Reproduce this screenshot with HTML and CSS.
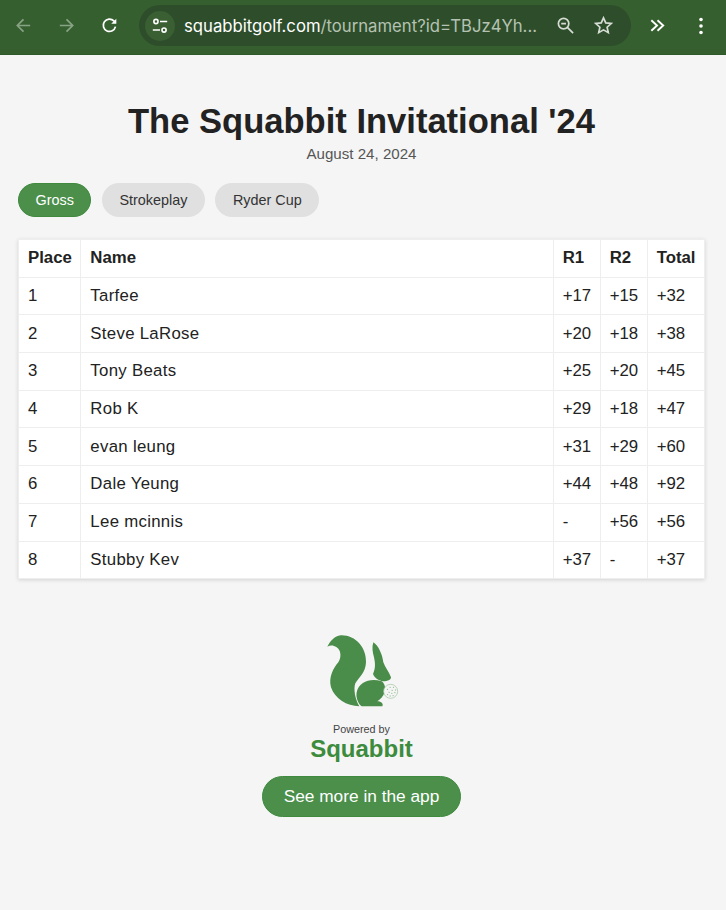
FILE: index.html
```html
<!DOCTYPE html>
<html lang="en">
<head>
<meta charset="utf-8">
<title>The Squabbit Invitational '24</title>
<link rel="stylesheet" href="styles.css">
</head>
<body>
<header class="chrome">
  <svg class="nav-icon dim" viewBox="0 0 20 20"><path d="M17 10H4M10 3.500 3.500 10l6.500 6.500"/></svg>
  <svg class="nav-icon dim" viewBox="0 0 20 20"><path d="M3 10h13M10 3.500 16.500 10 10 16.500"/></svg>
  <svg class="nav-icon" viewBox="0 0 20 20"><path d="M16.300 11.200A6.500 6.500 0 1 1 14.600 5.200L16.500 7"/><path class="solid" d="M17.200 2.800v5.400h-5.400z"/></svg>
  <div class="omnibox">
    <span class="chip">
      <svg viewBox="0 0 20 20"><circle cx="5.500" cy="5" r="2.300"/><path d="M10 5h8M2 14.500h8"/><circle cx="14.500" cy="14.500" r="2.300"/></svg>
    </span>
    <span class="url"><span class="host">squabbitgolf.com</span>/tournament?id=TBJz4Yh...</span>
    <svg class="omni-icon" viewBox="0 0 20 20"><circle cx="8" cy="8" r="5.500"/><path d="M5.500 8h5M12.200 12.200 18 18"/></svg>
    <svg class="omni-icon" viewBox="0 0 20 20"><path d="m10 2 2.400 5.300 5.600.6-4.200 3.900 1.200 5.700L10 14.600l-5 2.900 1.200-5.700L2 7.900l5.600-.6z"/></svg>
  </div>
  <svg class="nav-icon extra" viewBox="0 0 20 20"><path d="m3.500 4.500 6 5.500-6 5.500M10 4.500l6 5.500-6 5.500"/></svg>
  <svg class="kebab" viewBox="0 0 6 20"><circle cx="3" cy="3.500" r="1.800"/><circle cx="3" cy="10" r="1.800"/><circle cx="3" cy="16.500" r="1.800"/></svg>
</header>

<main class="page">
  <h1 class="title">The Squabbit Invitational '24</h1>
  <p class="date">August 24, 2024</p>

  <nav class="tabs">
    <button class="tab active">Gross</button>
    <button class="tab">Strokeplay</button>
    <button class="tab">Ryder Cup</button>
  </nav>

  <table class="board">
    <thead>
      <tr><th>Place</th><th class="wide">Name</th><th>R1</th><th>R2</th><th>Total</th></tr>
    </thead>
    <tbody>
      <tr><td>1</td><td class="player">Tarfee</td><td>+17</td><td>+15</td><td>+32</td></tr>
      <tr><td>2</td><td class="player">Steve LaRose</td><td>+20</td><td>+18</td><td>+38</td></tr>
      <tr><td>3</td><td class="player">Tony Beats</td><td>+25</td><td>+20</td><td>+45</td></tr>
      <tr><td>4</td><td class="player">Rob K</td><td>+29</td><td>+18</td><td>+47</td></tr>
      <tr><td>5</td><td class="player">evan leung</td><td>+31</td><td>+29</td><td>+60</td></tr>
      <tr><td>6</td><td class="player">Dale Yeung</td><td>+44</td><td>+48</td><td>+92</td></tr>
      <tr><td>7</td><td class="player">Lee mcinnis</td><td>-</td><td>+56</td><td>+56</td></tr>
      <tr><td>8</td><td class="player">Stubby Kev</td><td>+37</td><td>-</td><td>+37</td></tr>
    </tbody>
  </table>

  <footer class="brand">
    <svg class="logo" viewBox="72 30 225 225">
      <path d="M82 68C92 50 104 36 122 34C165 32 200 70 198 115C197 145 178 160 166 178C160 195 165 225 178 247C140 246 105 225 93 190C85 160 100 132 115 115C125 100 123 78 110 70C100 63 90 63 82 68Z"/>
      <path d="M220 55C235 65 247 90 250 115C255 130 268 145 273 160C273 166 268 170 255 172C240 172 225 165 219 150C228 130 225 115 222 100C218 85 215 70 220 55Z"/>
      <path d="M245 172C212 162 178 172 170 205C167 222 175 240 185 247H247C251 240 245 232 232 232C242 226 250 216 254 205C258 192 254 178 245 172Z"/>
      <circle class="ball" cx="272" cy="202" r="21"/>
      <path class="dimples" d="M262 196h1M270 190h1M280 190h1M286 198h1M276 199h1M267 205h1M275 208h1M284 206h1M262 212h1M270 216h1M279 215h1"/>
    </svg>
    <span class="powered">Powered by</span>
    <span class="wordmark">Squabbit</span>
    <a class="cta" href="#">See more in the app</a>
  </footer>
</main>
</body>
</html>
```
FILE: styles.css
```css
* { box-sizing: border-box; }

html, body {
  margin: 0;
  background: #f5f5f5;
}

body {
  font-family: "Liberation Sans", Arial, sans-serif;
  color: #222;
  height: 910px;
  overflow: hidden;
}

.chrome {
  height: 55px;
  background: #365f30;
  border-bottom: 1px solid #2f5a2c;
  display: flex;
  align-items: center;
  padding: 0 0 3px 14px;
}

.chrome svg { flex: none; fill: none; stroke: #fff; stroke-width: 1.8; }

.nav-icon { width: 19px; height: 19px; margin-right: 24px; }
.chrome svg.nav-icon.dim { stroke: #88a383; }
.chrome svg .solid { fill: #fff; stroke: none; }

.omnibox {
  width: 492px;
  height: 41px;
  margin-left: -4px;
  border-radius: 21px;
  background: #2e4e2b;
  display: flex;
  align-items: center;
  padding: 0 20px 0 6px;
}

.chip {
  width: 30px;
  height: 30px;
  border-radius: 50%;
  background: #395f33;
  display: flex;
  align-items: center;
  justify-content: center;
  flex: none;
}

.chrome .chip svg { width: 18px; height: 18px; stroke: #fff; stroke-width: 1.8; }

.url {
  flex: 1;
  margin-left: 9px;
  font-family: Inter, "Liberation Sans", sans-serif;
  font-size: 16.700px;
  white-space: nowrap;
  color: #b5c2b2;
}

.host { color: #fff; }

.chrome .omni-icon { width: 19px; height: 19px; stroke: #d5dcd3; margin-left: 19px; }

.chrome .extra { width: 19px; height: 19px; margin: 0 0 0 17px; stroke-width: 2; }

.chrome .kebab { width: 6px; height: 20px; margin-left: 31px; fill: #fff; stroke: none; }

.page {
  padding: 47px 21px 0 18px;
  display: flex;
  flex-direction: column;
}

.title {
  margin: 0;
  font-size: 34.560px;
  line-height: 38px;
  font-weight: 700;
  text-align: center;
  color: #222;
}

.date {
  margin: 5px 0 0;
  font-size: 15.100px;
  line-height: 17px;
  text-align: center;
  color: #555;
}

.tabs {
  display: flex;
  gap: 10.500px;
  margin-top: 21px;
}

.tab {
  height: 34px;
  padding: 0 17.500px;
  border: 0;
  border-radius: 17px;
  background: #e0e0e0;
  color: #333;
  font: 14.400px "Liberation Sans", Arial, sans-serif;
}

.tab.active {
  padding: 0 16.500px;
  background: #4b8f4b;
  border: 1px solid #3f8a3f;
  color: #fff;
}

.board {
  width: 100%;
  margin-top: 22px;
  border-collapse: collapse;
  background: #fff;
  box-shadow: 0 1px 4px rgba(0, 0, 0, 0.14);
  font-size: 16.800px;
  color: #222;
}

.board th,
.board td {
  height: 37.700px;
  padding: 0 8.500px 0 9px;
  border: 1px solid #eeeeee;
  text-align: left;
  white-space: nowrap;
}

.board th { font-weight: 700; }
.board .wide { width: 100%; }
.board .player { letter-spacing: 0.300px; }

.brand {
  display: flex;
  flex-direction: column;
  align-items: center;
  margin-top: 55px;
}

.logo { width: 75px; height: 75px; fill: #4a8d4a; }
.logo .ball { fill: #f5f5f5; stroke: #9cc29c; stroke-width: 2; }
.logo .dimples { fill: none; stroke: #8cb88c; stroke-width: 3; stroke-linecap: round; }

.powered {
  margin-top: 13px;
  font-size: 10.800px;
  line-height: 14px;
  color: #444;
}

.wordmark {
  margin-top: -1px;
  font-size: 24px;
  line-height: 28px;
  font-weight: 700;
  color: #3d8b3d;
}

.cta {
  margin-top: 13px;
  width: 199px;
  height: 41px;
  border-radius: 21px;
  background: #4b8f4b;
  border: 1px solid #3f8a3f;
  color: #fff;
  font-size: 17.300px;
  line-height: 39px;
  text-align: center;
  text-decoration: none;
}
```
